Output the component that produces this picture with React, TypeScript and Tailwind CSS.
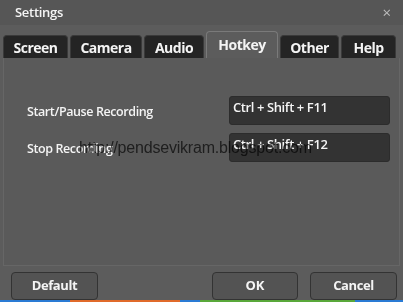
const tabs = [
  { label: "Screen", w: "w-[65px]" },
  { label: "Camera", w: "w-[72px]" },
  { label: "Audio", w: "w-[60px]" },
  { label: "Hotkey", w: "w-[72px]" },
  { label: "Other", w: "w-[59px]" },
  { label: "Help", w: "w-[55px]" },
];

const hotkeys = [
  { label: "Start/Pause Recording", keys: "Ctrl + Shift + F11" },
  { label: "Stop Recording", keys: "Ctrl + Shift + F12" },
];

export default function App() {
  return (
    <div className="relative w-[403px] h-[302px] bg-[#5c5c5c] text-[#f4f4f4] font-['Open_Sans',sans-serif] overflow-hidden flex flex-col">
      {/* Title bar */}
      <div className="h-[25px] shrink-0 bg-[#565656] flex items-center justify-between pl-[15px] pr-[12px]">
        <span className="text-[13px] font-semibold tracking-[-0.3px]">Settings</span>
        <span className="text-[15px] text-[#bdbdbd] leading-none">×</span>
      </div>

      {/* Tabs */}
      <div className="flex items-end gap-[2px] pl-[3px] h-[32px] mt-[1px] shrink-0">
        {tabs.map((t) =>
          t.label === "Hotkey" ? (
            <div
              key={t.label}
              className={`${t.w} h-[27px] bg-[#5c5c5c] border border-b-0 border-[#7a7a7a] rounded-t-[4px] flex items-start justify-center pt-[2px] text-[14px] font-bold tracking-[-0.5px]`}
            >
              {t.label}
            </div>
          ) : (
            <div
              key={t.label}
              className={`${t.w} h-[23px] bg-[#242424] border border-b-0 border-[#3a3a3a] rounded-t-[4px] flex items-center justify-center pt-[1px] text-[14px] font-bold tracking-[-0.5px]`}
            >
              {t.label}
            </div>
          )
        )}
      </div>

      {/* Panel */}
      <div className="mx-[3px] h-[208px] shrink-0 bg-[#5a5a5a] border border-t-0 border-[#666] pt-[38px] pl-[23px] pr-[9px] flex flex-col gap-[8px]">
        {hotkeys.map((h) => (
          <div key={h.label} className="flex items-center justify-between">
            <span className="text-[12.5px] font-semibold tracking-[-0.4px] pt-[4px]">{h.label}</span>
            <div className="w-[161px] h-[29px] bg-[#333333] border border-[#2c2c2c] rounded-[3px] px-[3px] pt-[1px] text-[13px] font-semibold tracking-[-0.4px]">
              {h.keys}
            </div>
          </div>
        ))}
      </div>

      {/* Watermark */}
      <span className="absolute left-[79px] top-[136px] text-[16px] text-[#444]/90 font-['Liberation_Sans',sans-serif] tracking-[-0.2px] mix-blend-multiply">
        http://pendsevikram.blogspot.com
      </span>

      {/* Buttons */}
      <div className="flex items-center pl-[11px] pr-[6px] pt-[6px] gap-[12px]">
        <button className="w-[87px] h-[28px] rounded-[4px] border border-[#333] bg-[#535353] text-[13px] font-bold tracking-[-0.4px] mr-auto">
          Default
        </button>
        <button className="w-[86px] h-[28px] rounded-[4px] border border-[#333] bg-[#535353] text-[13px] font-bold">
          OK
        </button>
        <button className="w-[87px] h-[28px] rounded-[4px] border border-[#333] bg-[#535353] text-[13px] font-bold tracking-[-0.4px]">
          Cancel
        </button>
      </div>

      {/* Desktop strip behind */}
      <div className="absolute bottom-0 left-0 right-0 h-[2px] flex">
        <div className="w-[70px] bg-[#2a7bd4]" />
        <div className="w-[110px] bg-[#e06a2a]" />
        <div className="w-[20px] bg-[#2a7bd4]" />
        <div className="w-[155px] bg-[#59a83a]" />
        <div className="flex-1 bg-[#2a7bd4]" />
      </div>
    </div>
  );
}
